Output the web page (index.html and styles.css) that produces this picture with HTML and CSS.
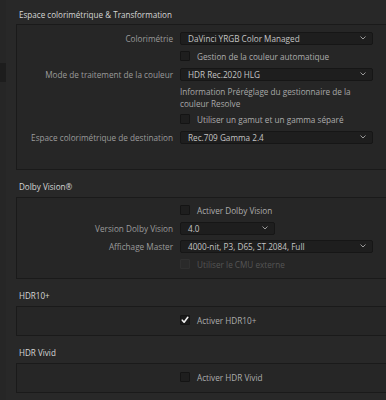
FILE: index.html
```html
<!DOCTYPE html>
<html lang="fr">
<head>
<meta charset="utf-8">
<title>Gestion des couleurs</title>
<link rel="stylesheet" href="styles.css">
</head>
<body>
<div class="app">
  <aside class="side"><div class="side-item"></div></aside>
  <main class="content">
    <section class="group group-first">
      <h2 class="group-title">Espace colorimétrique &amp; Transformation</h2>
      <div class="panel panel-color">
        <div class="row">
          <span class="label">Colorimétrie</span>
          <div class="select"><span>DaVinci YRGB Color Managed</span><svg class="chev" width="6" height="4" viewBox="0 0 6 4"><polyline points="0.5,0.5 3,3 5.5,0.5"/></svg></div>
        </div>
        <div class="row">
          <span class="label"></span>
          <label class="check"><span class="box"></span>Gestion de la couleur automatique</label>
        </div>
        <div class="row">
          <span class="label">Mode de traitement de la couleur</span>
          <div class="select"><span>HDR Rec.2020 HLG</span><svg class="chev" width="6" height="4" viewBox="0 0 6 4"><polyline points="0.5,0.5 3,3 5.5,0.5"/></svg></div>
        </div>
        <div class="row row-info">
          <span class="label"></span>
          <p class="info">Information Préréglage du gestionnaire de la<br>couleur Resolve</p>
        </div>
        <div class="row">
          <span class="label"></span>
          <label class="check"><span class="box"></span>Utiliser un gamut et un gamma séparé</label>
        </div>
        <div class="row">
          <span class="label">Espace colorimétrique de destination</span>
          <div class="select"><span>Rec.709 Gamma 2.4</span><svg class="chev" width="6" height="4" viewBox="0 0 6 4"><polyline points="0.5,0.5 3,3 5.5,0.5"/></svg></div>
        </div>
      </div>
    </section>

    <section class="group">
      <h2 class="group-title">Dolby Vision®</h2>
      <div class="panel panel-dolby">
        <div class="row">
          <span class="label"></span>
          <label class="check"><span class="box"></span>Activer Dolby Vision</label>
        </div>
        <div class="row">
          <span class="label">Version Dolby Vision</span>
          <div class="select select-short"><span>4.0</span><svg class="chev" width="6" height="4" viewBox="0 0 6 4"><polyline points="0.5,0.5 3,3 5.5,0.5"/></svg></div>
        </div>
        <div class="row">
          <span class="label">Affichage Master</span>
          <div class="select"><span>4000-nit, P3, D65, ST.2084, Full</span><svg class="chev" width="6" height="4" viewBox="0 0 6 4"><polyline points="0.5,0.5 3,3 5.5,0.5"/></svg></div>
        </div>
        <div class="row">
          <span class="label"></span>
          <label class="check check-disabled"><span class="box"></span>Utiliser le CMU externe</label>
        </div>
      </div>
    </section>

    <section class="group">
      <h2 class="group-title">HDR10+</h2>
      <div class="panel panel-single">
        <div class="row">
          <span class="label"></span>
          <label class="check"><span class="box box-checked"><svg width="8" height="8" viewBox="0 0 8 8"><polyline points="1.3,4.2 3.1,6.2 6.8,1.3"/></svg></span>Activer HDR10+</label>
        </div>
      </div>
    </section>

    <section class="group">
      <h2 class="group-title">HDR Vivid</h2>
      <div class="panel panel-single">
        <div class="row">
          <span class="label"></span>
          <label class="check"><span class="box"></span>Activer HDR Vivid</label>
        </div>
      </div>
    </section>
  </main>
</div>
</body>
</html>
```

FILE: styles.css
```css
html, body {
  margin: 0;
  padding: 0;
  background: #282828;
}

body {
  font-family: "Open Sans", "Noto Sans", "Liberation Sans", sans-serif;
  font-size: 8.2px;
  color: #a0a0a0;
  width: 386px;
  height: 400px;
  overflow: hidden;
}

.app {
  display: flex;
  height: 400px;
}

.side {
  width: 6px;
  flex: none;
  background: #262626;
}

.side-item {
  margin-top: 63px;
  height: 19px;
  background: #1d1d1d;
}

.content {
  flex: 1;
  min-width: 0;
}

.group-title {
  margin: 10px 0 3px 13px;
  font-size: 8.1px;
  line-height: 14px;
  font-weight: 500;
  color: #d6d6d6;
}

.group-first .group-title {
  margin-top: 8px;
  margin-bottom: 2px;
}

.panel {
  margin-left: 10px;
  border: 1px solid #1a1a1a;
  border-right: none;
  background: #262626;
}

.panel-color {
  padding: 4px 0 23px;
}

.panel-dolby {
  padding: 3px 0 5px;
}

.panel-single {
  padding: 4px 0 6px;
}

.row {
  display: grid;
  grid-template-columns: 156px 193px;
  column-gap: 7px;
  height: 18px;
  align-items: center;
}

.row-info {
  height: 27px;
  align-items: start;
}

.label {
  text-align: right;
  white-space: nowrap;
  color: #9b9b9b;
}

.select {
  box-sizing: border-box;
  height: 13px;
  display: flex;
  align-items: center;
  justify-content: space-between;
  padding: 0 6px 0 7px;
  background: #1e1e1e;
  border: 1px solid #161616;
  border-radius: 2px;
  color: #c4c4c4;
  white-space: nowrap;
}

.select-short {
  width: 95px;
}

.chev {
  flex: none;
  fill: none;
  stroke: #9a9a9a;
  stroke-width: 1;
}

.check {
  display: flex;
  align-items: center;
  gap: 7px;
  color: #adadad;
  white-space: nowrap;
}

.box {
  box-sizing: border-box;
  width: 10px;
  height: 10px;
  flex: none;
  background: #1e1e1e;
  border: 1px solid #141414;
  border-radius: 1px;
  display: flex;
  align-items: center;
  justify-content: center;
}

.box-checked {
  background: #1a1a1a;
}

.box-checked svg {
  fill: none;
  stroke: #f2f2f2;
  stroke-width: 1.6;
  stroke-linecap: round;
  stroke-linejoin: round;
}

.check-disabled {
  color: #555555;
}

.check-disabled .box {
  background: #2a2a2a;
  border-color: #303030;
}

.info {
  margin: 3px 0 0;
  line-height: 12px;
  color: #a8a8a8;
}
```
